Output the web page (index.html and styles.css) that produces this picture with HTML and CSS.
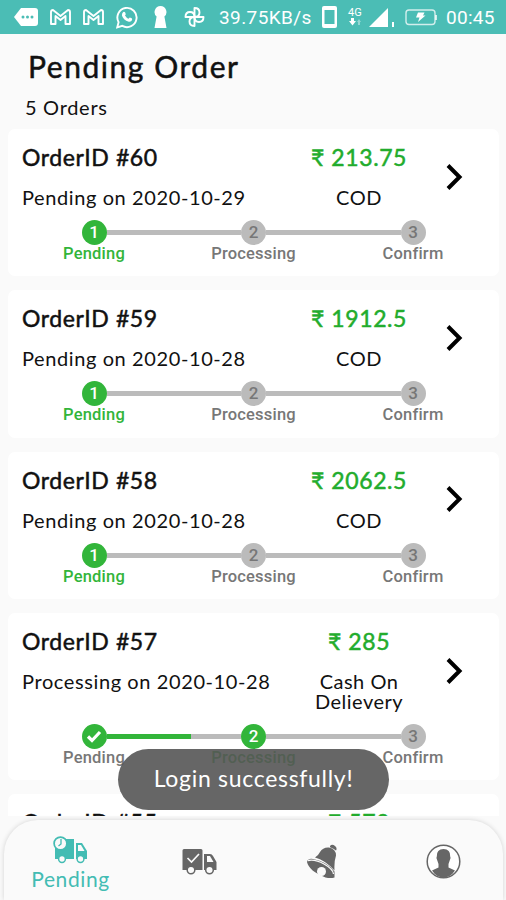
FILE: index.html
```
<!DOCTYPE html>
<html lang="en">
<head>
    <meta charset="UTF-8">
    <meta name="viewport" content="width=device-width, initial-scale=1.0">
    <title>Pending Order</title>
    <link rel="stylesheet" href="styles.css">
</head>
<body>
    <div class="status-bar">
        <svg width="24" height="18" viewBox="0 0 24 18"><path d="M7 0h14q3 0 3 3v12q0 3-3 3H7L0 9z" fill="#fff"/><g fill="#4bbdb5"><circle cx="9" cy="9" r="1.500"/><circle cx="13.500" cy="9" r="1.500"/><circle cx="18" cy="9" r="1.500"/></g></svg>
        <svg class="gap-mail" width="21" height="16" viewBox="0 0 21 16"><path d="M1 15V3q0-2 2-2l7.500 6L18 1q2 0 2 2v12h-4.500V7l-5 4-5-4v8z" fill="none" stroke="#fff" stroke-width="1.900" stroke-linejoin="round"/></svg>
        <svg class="gap-mail" width="21" height="16" viewBox="0 0 21 16"><path d="M1 15V3q0-2 2-2l7.500 6L18 1q2 0 2 2v12h-4.500V7l-5 4-5-4v8z" fill="none" stroke="#fff" stroke-width="1.900" stroke-linejoin="round"/></svg>
        <svg class="gap-chat" width="22" height="23" viewBox="0 0 22 23"><path d="M1.200 21.500l1.400-5.300a9.600 9.600 0 1 1 3.700 3.700z" fill="none" stroke="#fff" stroke-width="1.900"/><path d="M7.300 6q1.800-.8 2.500 2.200l-.8 1.400q1.400 2.400 3.500 3.200l1.300-1.300q2.800.6 2.400 2.300-.8 2.200-3.400 1.900Q7 14 5.900 9.200 6 6.900 7.300 6z" fill="#fff"/></svg>
        <svg class="gap-key" width="13" height="22" viewBox="0 0 13 22"><path d="M6.500 0a6 6 0 0 1 3.900 10.500L12.500 22H.5l2.100-11.500A6 6 0 0 1 6.500 0z" fill="#fff"/></svg>
        <svg class="gap-fan" width="21" height="20" viewBox="0 0 21 20"><g fill="none" stroke="#fff" stroke-width="1.900" stroke-linejoin="round"><path d="M10.500 10V1q5 0 5 4.500T10.500 10"/><path d="M10.500 10h9q0 5-4.500 5t-4.500-5"/><path d="M10.500 10v9q-5 0-5-4.500t5-4.500"/><path d="M10.500 10h-9q0-5 4.500-5t4.500 5"/></g></svg>
        <span class="speed">39.75KB/s</span>
        <svg class="gap-phone" width="15" height="22" viewBox="0 0 15 22"><rect width="15" height="22" rx="2" fill="#fff"/><rect x="2.500" y="4" width="10" height="14" fill="#4bbdb5"/></svg>
        <div class="network">
            <span>4G</span>
            <svg width="14" height="8" viewBox="0 0 14 8"><path d="M3 0h3v3h2L4.500 7.500 1 3h2z" fill="#fff"/><path d="M11 1l2 3h-1v3h-2V4H9z" fill="#fff" opacity=".4"/></svg>
        </div>
        <svg class="gap-signal" width="26" height="19" viewBox="0 0 26 19"><path d="M0 19L19 0v19zM23 14h2v5h-2z" fill="#fff"/></svg>
        <svg class="gap-battery" width="32" height="17" viewBox="0 0 32 17"><rect x="1" y="1" width="29" height="14.500" rx="3" fill="none" stroke="#fff" stroke-width="1.400" opacity=".75"/><path d="M31 6v5" stroke="#fff" stroke-width="1.500"/><path d="M13 3.500h6.500L18 6.500h2.500L13 13l1.500-4.500H11z" fill="#fff"/></svg>
        <span class="clock">00:45</span>
    </div>

    <div class="orders">
        <h1 class="title">Pending Order</h1>
        <p class="count">5 Orders</p>

        <div class="card">
            <div class="card-top">
                <div class="info">
                    <h2>OrderID #60</h2>
                    <p>Pending on 2020-10-29</p>
                </div>
                <div class="payment">
                    <span class="price">₹ 213.75</span>
                    <p>COD</p>
                </div>
                <svg class="arrow" width="17" height="28" viewBox="0 0 17 28"><path d="M2 2.500L13.500 14 2 25.500" fill="none" stroke="#000" stroke-width="4"/></svg>
            </div>
            <div class="steps">
                <div class="step active"><span class="dot">1</span><span class="label">Pending</span></div>
                <div class="line"></div>
                <div class="step"><span class="dot">2</span><span class="label">Processing</span></div>
                <div class="line"></div>
                <div class="step"><span class="dot">3</span><span class="label">Confirm</span></div>
            </div>
        </div>

        <div class="card">
            <div class="card-top">
                <div class="info">
                    <h2>OrderID #59</h2>
                    <p>Pending on 2020-10-28</p>
                </div>
                <div class="payment">
                    <span class="price">₹ 1912.5</span>
                    <p>COD</p>
                </div>
                <svg class="arrow" width="17" height="28" viewBox="0 0 17 28"><path d="M2 2.500L13.500 14 2 25.500" fill="none" stroke="#000" stroke-width="4"/></svg>
            </div>
            <div class="steps">
                <div class="step active"><span class="dot">1</span><span class="label">Pending</span></div>
                <div class="line"></div>
                <div class="step"><span class="dot">2</span><span class="label">Processing</span></div>
                <div class="line"></div>
                <div class="step"><span class="dot">3</span><span class="label">Confirm</span></div>
            </div>
        </div>

        <div class="card">
            <div class="card-top">
                <div class="info">
                    <h2>OrderID #58</h2>
                    <p>Pending on 2020-10-28</p>
                </div>
                <div class="payment">
                    <span class="price">₹ 2062.5</span>
                    <p>COD</p>
                </div>
                <svg class="arrow" width="17" height="28" viewBox="0 0 17 28"><path d="M2 2.500L13.500 14 2 25.500" fill="none" stroke="#000" stroke-width="4"/></svg>
            </div>
            <div class="steps">
                <div class="step active"><span class="dot">1</span><span class="label">Pending</span></div>
                <div class="line"></div>
                <div class="step"><span class="dot">2</span><span class="label">Processing</span></div>
                <div class="line"></div>
                <div class="step"><span class="dot">3</span><span class="label">Confirm</span></div>
            </div>
        </div>

        <div class="card">
            <div class="card-top">
                <div class="info">
                    <h2>OrderID #57</h2>
                    <p>Processing on 2020-10-28</p>
                </div>
                <div class="payment">
                    <span class="price">₹ 285</span>
                    <p>Cash On<br>Delievery</p>
                </div>
                <svg class="arrow" width="17" height="28" viewBox="0 0 17 28"><path d="M2 2.500L13.500 14 2 25.500" fill="none" stroke="#000" stroke-width="4"/></svg>
            </div>
            <div class="steps">
                <div class="step done"><span class="dot"><svg width="16" height="13" viewBox="0 0 16 13"><path d="M2 6.500l4 4L14 2" fill="none" stroke="#fff" stroke-width="3.200"/></svg></span><span class="label">Pending</span></div>
                <div class="line half"></div>
                <div class="step active"><span class="dot">2</span><span class="label">Processing</span></div>
                <div class="line"></div>
                <div class="step"><span class="dot">3</span><span class="label">Confirm</span></div>
            </div>
        </div>

        <div class="card">
            <div class="card-top">
                <div class="info">
                    <h2>OrderID #55</h2>
                </div>
                <div class="payment">
                    <span class="price">₹ 570</span>
                </div>
            </div>
        </div>
    </div>

    <div class="nav-wrap">
        <nav class="nav">
            <a class="nav-item current">
                <svg width="35" height="28" viewBox="0 0 35 28"><path d="M2 9h11V3h8v20H2zM23 7h6l5 8v8H23z" fill="currentColor"/><path d="M25 9h3l3.500 6H25z" fill="#fafafa"/><circle cx="7.500" cy="7.500" r="6.400" fill="#fafafa" stroke="currentColor" stroke-width="1.700"/><path d="M8 3v5l-2.500 2" fill="none" stroke="currentColor" stroke-width="1.300"/><g fill="#fafafa" stroke="currentColor" stroke-width="1.500"><circle cx="9" cy="23" r="3.400"/><circle cx="27.500" cy="23" r="3.400"/></g></svg>
                <span>Pending</span>
            </a>
            <a class="nav-item">
                <svg width="35" height="27" viewBox="0 0 35 27"><path d="M2 1h17q1.500 0 1.500 1.500V22H.5V2.500Q.500 1 2 1zM22 6h6q2 0 3 2l3.500 6v8H22z" fill="currentColor"/><path d="M25 8h3l3.500 6H25z" fill="#fafafa"/><path d="M5.500 10l4 4L17 6" fill="none" stroke="#fafafa" stroke-width="1.700"/><g fill="#fafafa" stroke="currentColor" stroke-width="1.500"><circle cx="9" cy="22" r="3.800"/><circle cx="27.500" cy="22" r="3.800"/></g></svg>
            </a>
            <a class="nav-item">
                <svg width="32" height="35" viewBox="0 0 32 35"><path d="M24 2q2-2.500 5 0 2.500 2 1 4.500-3-2.500-6-3.200zM9 13.500Q12 12 14 8q3-5 9-4.500 7 1.500 7 8-2 6-1.500 15Q19 16 9 13.500z" fill="currentColor"/><path d="M1 18q1-4 6-3 14 2.500 21.500 12.500v6q-4 1-9 0Q3 27 1 18z" fill="currentColor"/><path d="M2 16.500Q9 15 18 20t9.500 10" fill="none" stroke="#fafafa" stroke-width="1.300"/><circle cx="15.500" cy="27.500" r="4.500" fill="#fafafa"/></svg>
            </a>
            <a class="nav-item profile">
                <svg width="35" height="35" viewBox="0 0 35 35"><circle cx="17.500" cy="17.500" r="16.300" fill="#fff" stroke="currentColor" stroke-width="1.500"/><path d="M17.500 5q7 0 6.700 7.500 1 1-.5 4l-1.200 3.500v3.500l6.500 3q-4.500 7-11.500 7T6 26.500l6.500-3V20l-1.200-3.500q-1.500-3-.5-4Q10.500 5 17.500 5z" fill="currentColor"/></svg>
            </a>
        </nav>
    </div>

    <div class="toast">Login successfully!</div>
</body>
</html>
```
FILE: styles.css
```
* {
    box-sizing: border-box;
}
body {
    font-family: Lato, sans-serif;
    margin: 0;
    height: 900px;
    display: flex;
    flex-direction: column;
    background-color: #fafafa;
    color: #111;
    overflow: hidden;
}
h1, h2, p {
    margin: 0;
}
svg {
    display: block;
    flex-shrink: 0;
}
.status-bar {
    height: 34px;
    flex-shrink: 0;
    display: flex;
    align-items: center;
    padding-left: 14px;
    background-color: #4bbdb5;
    color: #fff;
    font-family: Roboto, sans-serif;
    font-size: 19px;
    line-height: 34px;
    white-space: nowrap;
}
.gap-mail {
    margin-left: 12px;
}
.gap-chat {
    margin-left: 12px;
}
.gap-key {
    margin-left: 16px;
}
.gap-fan {
    margin-left: 17px;
}
.speed {
    width: 94px;
    margin-left: 14px;
    padding-top: 2px;
    letter-spacing: 0.4px;
}
.gap-phone {
    margin-left: 9px;
}
.network {
    width: 16px;
    margin-left: 11px;
    font-size: 11px;
    line-height: 10px;
}
.gap-signal {
    margin-left: 5px;
}
.gap-battery {
    margin-left: 10px;
}
.clock {
    margin-left: 9px;
    padding-top: 2px;
    letter-spacing: 0.3px;
}
.orders {
    height: 782px;
    flex-shrink: 0;
    overflow: hidden;
}
.title {
    padding: 14px 0 0 28px;
    font-size: 30px;
    font-weight: 400;
    line-height: 36px;
    letter-spacing: 1.55px;
    -webkit-text-stroke: 0.5px #111;
}
.count {
    padding: 11px 0 0 25px;
    height: 45px;
    font-size: 20px;
    line-height: 24px;
    letter-spacing: 0.7px;
}
.card {
    margin: 0 7px 14px 8px;
    padding: 14px 0 13px 14px;
    min-height: 147.3px;
    border-radius: 7px;
    background-color: #fff;
}
.card-top {
    display: flex;
    align-items: center;
}
.info {
    width: 267px;
    align-self: flex-start;
}
.info h2,
.price {
    display: block;
    font-size: 23px;
    font-weight: 400;
    line-height: 28px;
    letter-spacing: 0.6px;
    -webkit-text-stroke: 0.5px;
}
.info p {
    margin-top: 14px;
    font-size: 20px;
    line-height: 24px;
    letter-spacing: 0.6px;
    white-space: nowrap;
}
.payment {
    width: 140px;
    text-align: center;
}
.price {
    color: #22ac2c;
}
.payment p {
    margin-top: 16px;
    padding-bottom: 1.5px;
    font-size: 20px;
    line-height: 20.5px;
    letter-spacing: 0.5px;
}
.arrow {
    margin-left: 17px;
    margin-top: 1px;
}
.steps {
    display: flex;
    align-items: flex-start;
    margin-top: 11px;
    padding-left: 59.5px;
    font-family: Roboto, sans-serif;
    font-weight: 500;
}
.step {
    width: 25px;
    display: flex;
    flex-direction: column;
    align-items: center;
    color: #777;
}
.dot {
    width: 25px;
    height: 25px;
    display: flex;
    align-items: center;
    justify-content: center;
    border-radius: 50%;
    background-color: #bbb;
    font-size: 17px;
    line-height: 25px;
}
.label {
    font-size: 16.5px;
    line-height: 18px;
    letter-spacing: 0.2px;
}
.active .dot,
.done .dot {
    background-color: #32b53a;
    color: #fff;
}
.active .label {
    color: #32b53a;
}
.line {
    width: 134.5px;
    height: 5px;
    margin-top: 10px;
    background-color: #bbb;
}
.line.half {
    background: linear-gradient(to right, #32b53a 62.5%, #bbb 62.5%);
}
.nav-wrap {
    flex: 1;
    padding: 4px 3px 0 4px;
}
.nav {
    height: 100%;
    display: flex;
    border-radius: 34px 34px 0 0;
    background-color: #fafafa;
    box-shadow: 0 0 5px rgba(0, 0, 0, 0.16);
}
.nav-item {
    width: 123px;
    display: flex;
    flex-direction: column;
    align-items: center;
    padding-left: 1px;
    padding-top: 2px;
    justify-content: center;
    color: #666;
}
.nav-item.profile {
    width: 120px;
    padding-left: 0;
}
.nav-item.current {
    width: 133px;
    padding-left: 0;
    justify-content: flex-start;
    padding-top: 16px;
    color: #43bcb3;
    font-size: 21px;
    line-height: 26px;
    letter-spacing: 0.6px;
}
.current span {
    margin-top: 2px;
}
.toast {
    position: absolute;
    left: 118px;
    top: 749px;
    width: 271px;
    height: 61px;
    border-radius: 31px;
    background-color: rgba(85, 85, 85, 0.9);
    color: #fff;
    font-size: 23px;
    line-height: 59px;
    letter-spacing: 0.7px;
    text-align: center;
}
```
